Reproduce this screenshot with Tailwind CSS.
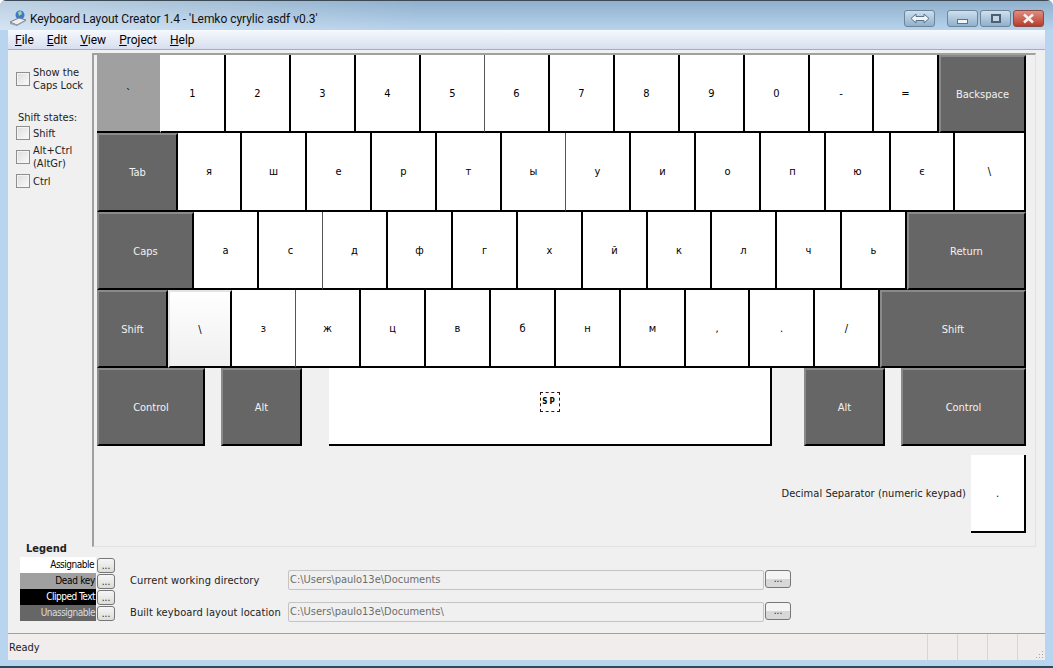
<!DOCTYPE html>
<html lang="en">
<head>
  <meta charset="UTF-8" />
  <title>Keyboard Layout Creator</title>
  <script src="https://cdn.jsdelivr.net/npm/@tailwindcss/browser@4"></script>
</head>
<body class="bg-white text-black font-['DejaVu_Sans',sans-serif] font-stretch-condensed text-[11px] overflow-hidden">
  <div class="w-[1053px] h-[668px] flex flex-col rounded-t-[6px] overflow-hidden bg-[#b9d4ee] border-b-2 border-[#2b4a5c]">

    <!-- Title bar -->
    <header class="h-[30px] shrink-0 flex items-center pl-[9px] pr-[9px] pt-[6px] bg-[linear-gradient(90deg,#ffffff66,#ffffff00_40%),linear-gradient(180deg,#8fb0cd,#b8d3ec)] border-t border-[#3c4a55]">
      <svg class="w-[18px] h-[17px] mr-[3px]" viewBox="0 0 18 17">
        <circle cx="11" cy="5" r="4.5" fill="#3f78c8" />
        <path d="M9 2l3-1 1 3-3 2z" fill="#9fd6b0" />
        <path d="M1 12l9-4 7 2-9 5z" fill="#eceef2" stroke="#7a808a" stroke-width="1" />
        <path d="M1 12v2l7 2 9-5v-1l-9 5z" fill="#9aa0aa" />
      </svg>
      <span class="font-['Roboto',sans-serif] font-stretch-normal text-[12px] text-[#111] tracking-[-0.04px]">Keyboard Layout Creator 1.4 - 'Lemko cyrylic asdf v0.3'</span>
      <div class="ml-auto flex items-start">
        <button class="w-[31px] h-[17px] mr-3 rounded-[3px] border border-[#6c8599] bg-gradient-to-b from-[#cfe0ee] to-[#8fb0cc] flex items-center justify-center">
          <svg class="w-[20px] h-[11px]" viewBox="0 0 20 11"><path d="M1 5.5L6 1v2.5h8V1l5 4.5L14 10V7.5H6V10z" fill="#eef4f9" stroke="#5d7286" /></svg>
        </button>
        <button class="w-[31px] h-[17px] mr-[2px] rounded-[3px] border border-[#6c8599] bg-gradient-to-b from-[#cfe0ee] to-[#8fb0cc] flex items-end justify-center pb-[2px]">
          <span class="w-[11px] h-[5px] bg-[#eef4f9] border border-[#5d7286]"></span>
        </button>
        <button class="w-[31px] h-[17px] mr-[2px] rounded-[3px] border border-[#6c8599] bg-gradient-to-b from-[#cfe0ee] to-[#8fb0cc] flex items-center justify-center">
          <span class="w-[10px] h-[9px] border-2 border-[#4d6072] bg-[#c4d6e6]"></span>
        </button>
        <button class="w-[31px] h-[17px] rounded-[3px] border border-[#8a4a44] bg-gradient-to-b from-[#e08d7f] to-[#b8392b] flex items-center justify-center">
          <svg class="w-[13px] h-[11px]" viewBox="0 0 13 11"><path d="M2 1.5l9 8M11 1.5l-9 8" stroke="#f4f4f4" stroke-width="2.6" /></svg>
        </button>
      </div>
    </header>

    <div class="flex-1 mx-[8px] mb-[7px] flex flex-col min-h-0">
      <!-- Menu -->
      <nav class="h-[20px] shrink-0 flex items-center pl-[7px] gap-[13px] bg-gradient-to-b from-[#f6f9fd] to-[#d7deef] border-b border-[#a9adb5] text-[12px] font-['Roboto',sans-serif] font-stretch-normal">
        <span><u>F</u>ile</span>
        <span><u>E</u>dit</span>
        <span><u>V</u>iew</span>
        <span><u>P</u>roject</span>
        <span><u>H</u>elp</span>
      </nav>

      <div class="flex-1 bg-[#f0f0f0] flex flex-col min-h-0">
        <div class="h-[507px] flex pt-[3px] shrink-0">
          <!-- Options column -->
          <aside class="w-[84px] shrink-0 flex flex-col pl-[8px] text-[#222]">
            <label class="flex items-center gap-[3px] mt-[13px] leading-[13px]">
              <span class="w-[14px] h-[14px] border border-[#8e8f8f] bg-gradient-to-br from-[#dcdcdc] to-[#fbfbfb] shadow-[inset_0_0_0_1px_#f4f4f4]"></span>
              Show the<br>Caps Lock
            </label>
            <p class="ml-[2px] mt-[19px] leading-[13px]">Shift states:</p>
            <label class="flex items-center gap-[3px] mt-[2px] leading-[13px]">
              <span class="w-[14px] h-[14px] border border-[#8e8f8f] bg-gradient-to-br from-[#dcdcdc] to-[#fbfbfb] shadow-[inset_0_0_0_1px_#f4f4f4]"></span>
              Shift
            </label>
            <label class="flex items-center gap-[3px] mt-[4px] leading-[13px]">
              <span class="w-[14px] h-[14px] border border-[#8e8f8f] bg-gradient-to-br from-[#dcdcdc] to-[#fbfbfb] shadow-[inset_0_0_0_1px_#f4f4f4]"></span>
              Alt+Ctrl<br>(AltGr)
            </label>
            <label class="flex items-center gap-[3px] mt-[4px] leading-[13px]">
              <span class="w-[14px] h-[14px] border border-[#8e8f8f] bg-gradient-to-br from-[#dcdcdc] to-[#fbfbfb] shadow-[inset_0_0_0_1px_#f4f4f4]"></span>
              Ctrl
            </label>
            <p class="mt-auto ml-[10px] mb-[2px] font-bold leading-[13px]">Legend</p>
          </aside>

          <!-- Keyboard panel -->
          <section class="w-[944px] h-[494px] shrink-0 border-l-2 border-t-2 border-[#a0a0a0] border-r border-b border-r-[#e2e2e2] border-b-[#e2e2e2] pl-[3px]">
            <div id="keyboard"></div>
            <div class="flex items-center justify-end mt-[9px] pr-[9px]">
              <span class="mr-[5px] text-[#222] tracking-[0.05px]">Decimal Separator (numeric keypad)</span>
              <div class="w-[55px] h-[78px] pt-[2px] bg-white border-r-2 border-b-2 border-black flex items-center justify-center">.</div>
            </div>
          </section>
        </div>

        <!-- Legend and paths -->
        <div class="h-[76px] shrink-0 flex pl-[12px] text-[#222]">
          <div class="w-[96px] shrink-0 flex flex-col text-[10px]">
            <div class="h-[16px] flex items-center">
              <span class="w-[76px] h-full bg-white text-black text-right pr-[2px] leading-[16px] tracking-[-0.5px]">Assignable</span>
              <button class="ml-[1px] w-[18px] h-[15px] rounded-[3px] border border-[#777] bg-gradient-to-b from-[#f6f6f6] to-[#dcdcdc] leading-[11px]">...</button>
            </div>
            <div class="h-[16px] flex items-center">
              <span class="w-[76px] h-full bg-[#a0a0a0] text-black text-right pr-[1px] leading-[16px] tracking-[-0.3px]">Dead key</span>
              <button class="ml-[1px] w-[18px] h-[15px] rounded-[3px] border border-[#777] bg-gradient-to-b from-[#f6f6f6] to-[#dcdcdc] leading-[11px]">...</button>
            </div>
            <div class="h-[16px] flex items-center">
              <span class="w-[76px] h-full bg-black text-white text-right pr-[1px] leading-[16px] tracking-[-0.5px]">Clipped Text</span>
              <button class="ml-[1px] w-[18px] h-[15px] rounded-[3px] border border-[#777] bg-gradient-to-b from-[#f6f6f6] to-[#dcdcdc] leading-[11px]">...</button>
            </div>
            <div class="h-[16px] flex items-center">
              <span class="w-[76px] h-full bg-[#666] text-[#ddd] text-right pr-[1px] leading-[16px] tracking-[-0.5px]">Unassignable</span>
              <button class="ml-[1px] w-[18px] h-[15px] rounded-[3px] border border-[#777] bg-gradient-to-b from-[#f6f6f6] to-[#dcdcdc] leading-[11px]">...</button>
            </div>
          </div>

          <div class="ml-[14px] pt-[13px] flex flex-col gap-[12px]">
            <div class="h-[20px] flex items-center">
              <span class="w-[158px] pt-[2px] tracking-[0.1px]">Current working directory</span>
              <div class="w-[476px] h-[20px] border border-[#c4c4c4] rounded-[2px] pl-px text-[#6d6d6d] leading-[18px]">C:\Users\paulo13e\Documents</div>
              <button class="ml-[1px] w-[26px] h-[18px] self-start rounded-[3px] border border-[#777] bg-gradient-to-b from-[#f4f4f4] from-50% to-[#d8d8d8] to-50% text-[10px] leading-[14px]">...</button>
            </div>
            <div class="h-[20px] flex items-center">
              <span class="w-[158px] pt-[2px] tracking-[0.1px]">Built keyboard layout location</span>
              <div class="w-[476px] h-[20px] border border-[#c4c4c4] rounded-[2px] pl-px text-[#6d6d6d] leading-[18px]">C:\Users\paulo13e\Documents\</div>
              <button class="ml-[1px] w-[26px] h-[18px] self-start rounded-[3px] border border-[#777] bg-gradient-to-b from-[#f4f4f4] from-50% to-[#d8d8d8] to-50% text-[10px] leading-[14px]">...</button>
            </div>
          </div>
        </div>

        <!-- Status bar -->
        <footer class="h-[27px] shrink-0 border-t border-[#a0a0a0] bg-[#f1eded] flex items-center pl-[1px] text-[#222]">
          <span class="flex-1 pt-[2px]">Ready</span>
          <span class="w-[30px] h-full border-l border-[#d9d5d5]"></span>
          <span class="w-[30px] h-full border-l border-[#d9d5d5]"></span>
          <span class="w-[30px] h-full border-l border-[#d9d5d5]"></span>
          <span class="w-[28px] h-full border-l border-[#d9d5d5] flex items-end justify-end pr-px pb-px">
            <svg class="w-[9px] h-[9px]" viewBox="0 0 9 9" fill="#a9a5a5">
              <rect x="7" y="1" width="1" height="1" />
              <rect x="4" y="4" width="1" height="1" /><rect x="7" y="4" width="1" height="1" />
              <rect x="1" y="7" width="1" height="1" /><rect x="4" y="7" width="1" height="1" /><rect x="7" y="7" width="1" height="1" />
            </svg>
          </span>
        </footer>
      </div>
    </div>
  </div>

  <script>
    const dark = "pt-[2px] bg-[#666] text-[#f2f2f2] border-t-2 border-l-2 border-t-[#8a8a8a] border-l-[#8a8a8a] border-r-2 border-b-2 border-r-black border-b-black";
    const white = "pt-[2px] bg-white border-r-2 border-b-2 border-black";
    const thin = "pt-[2px] bg-white border-r border-b-2 border-r-[#555] border-b-black";
    const dead = "pt-[2px] bg-[#a0a0a0] border-r border-b-2 border-r-white border-b-black";
    const focus = "pt-[2px] bg-gradient-to-b from-white to-[#efefef] border-2 border-[#e4e4e4] border-r-black border-b-black";
    const gap = "";

    // [label, left edge, style], the last item of a row is only its right edge
    const rows = [
      { height: 78, keys: [["`",97,dead],["1",161,white],["2",226,white],["3",291,white],["4",356,white],["5",421,thin],["6",485,white],["7",550,white],["8",615,white],["9",680,white],["0",745,white],["-",810,white],["=",874,white],["Backspace",939,dark],[1026]] },
      { height: 79, keys: [["Tab",97,dark],["я",178,white],["ш",242,white],["е",307,white],["р",372,white],["т",437,white],["ы",502,thin],["у",566,white],["и",631,white],["о",696,white],["п",761,white],["ю",826,white],["є",891,white],["\\",955,white],[1026]] },
      { height: 78, keys: [["Caps",97,dark],["а",194,white],["с",259,thin],["д",323,white],["ф",388,white],["г",453,white],["х",518,white],["й",583,white],["к",648,white],["л",712,white],["ч",777,white],["ь",842,white],["Return",907,dark],[1026]] },
      { height: 78, keys: [["Shift",97,dark],["\\",168,focus],["з",232,thin],["ж",296,white],["ц",361,white],["в",426,white],["б",491,white],["н",556,white],["м",621,white],[",",686,white],[".",750,white],["/",815,white],["Shift",880,dark],[1026]] },
      { height: 78, keys: [["Control",97,dark],["",205,gap],["Alt",221,dark],["",302,gap],["SP",329,white],["",772,gap],["Alt",804,dark],["",885,gap],["Control",901,dark],[1026]] }
    ];

    const keyboard = document.getElementById("keyboard");
    rows.forEach((row) => {
      const rowEl = document.createElement("div");
      rowEl.className = "flex";
      rowEl.style.height = row.height + "px";
      row.keys.slice(0, -1).forEach(([label, left, style], i) => {
        const next = row.keys[i + 1];
        const key = document.createElement("div");
        key.className = "h-full flex items-center justify-center shrink-0 " + style;
        key.style.width = (next.length === 1 ? next[0] : next[1]) - left + "px";
        if (label === "SP") {
          key.innerHTML = '<span class="w-[20px] h-[20px] mb-2.5 border border-dashed border-[#3a1010] flex items-center justify-center text-[8px] font-bold tracking-[2px]">SP</span>';
        } else {
          key.textContent = label;
        }
        rowEl.appendChild(key);
      });
      keyboard.appendChild(rowEl);
    });
  </script>
</body>
</html>
